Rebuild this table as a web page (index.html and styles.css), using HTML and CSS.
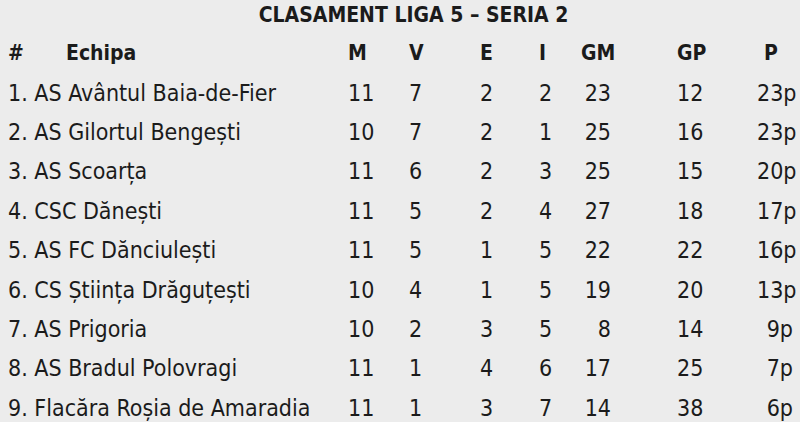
FILE: index.html
```html
<!DOCTYPE html>
<html lang="ro">
<head>
<meta charset="utf-8">
<title>Clasament Liga 5 – Seria 2</title>
<link rel="stylesheet" href="styles.css">
</head>
<body>
<div class="page">
  <h1 class="title">CLASAMENT LIGA 5 – SERIA 2</h1>
  <div class="table">
    <div class="row head">
      <div class="c name"><span class="hash">#</span><span>Echipa</span></div>
      <div class="c m">M</div><div class="c v">V</div><div class="c e">E</div><div class="c i">I</div>
      <div class="c gm">GM</div><div class="c gp">GP</div><div class="c p">P</div>
    </div>
    <div class="row"><div class="c name">1. AS Avântul Baia-de-Fier</div><div class="c m">11</div><div class="c v">7</div><div class="c e">2</div><div class="c i">2</div><div class="c gm">23</div><div class="c gp">12</div><div class="c p">23p</div></div>
    <div class="row"><div class="c name">2. AS Gilortul Bengești</div><div class="c m">10</div><div class="c v">7</div><div class="c e">2</div><div class="c i">1</div><div class="c gm">25</div><div class="c gp">16</div><div class="c p">23p</div></div>
    <div class="row"><div class="c name">3. AS Scoarța</div><div class="c m">11</div><div class="c v">6</div><div class="c e">2</div><div class="c i">3</div><div class="c gm">25</div><div class="c gp">15</div><div class="c p">20p</div></div>
    <div class="row"><div class="c name">4. CSC Dănești</div><div class="c m">11</div><div class="c v">5</div><div class="c e">2</div><div class="c i">4</div><div class="c gm">27</div><div class="c gp">18</div><div class="c p">17p</div></div>
    <div class="row"><div class="c name">5. AS FC Dănciulești</div><div class="c m">11</div><div class="c v">5</div><div class="c e">1</div><div class="c i">5</div><div class="c gm">22</div><div class="c gp">22</div><div class="c p">16p</div></div>
    <div class="row"><div class="c name">6. CS Știința Drăguțești</div><div class="c m">10</div><div class="c v">4</div><div class="c e">1</div><div class="c i">5</div><div class="c gm">19</div><div class="c gp">20</div><div class="c p">13p</div></div>
    <div class="row"><div class="c name">7. AS Prigoria</div><div class="c m">10</div><div class="c v">2</div><div class="c e">3</div><div class="c i">5</div><div class="c gm">8</div><div class="c gp">14</div><div class="c p">9p</div></div>
    <div class="row"><div class="c name">8. AS Bradul Polovragi</div><div class="c m">11</div><div class="c v">1</div><div class="c e">4</div><div class="c i">6</div><div class="c gm">17</div><div class="c gp">25</div><div class="c p">7p</div></div>
    <div class="row"><div class="c name">9. Flacăra Roșia de Amaradia</div><div class="c m">11</div><div class="c v">1</div><div class="c e">3</div><div class="c i">7</div><div class="c gm">14</div><div class="c gp">38</div><div class="c p">6p</div></div>
  </div>
</div>
</body>
</html>
```
FILE: styles.css
```css
html, body {
  margin: 0;
  padding: 0;
  background: #ececec;
}
body {
  font-family: "DejaVu Sans Condensed", "DejaVu Sans", sans-serif;
  font-stretch: condensed;
  color: #1b1b1b;
  font-size: 23px;
}
.page {
  width: 800px;
  height: 422px;
  overflow: hidden;
  padding: 0 7px 0 8px;
  box-sizing: border-box;
}
.title {
  margin: 0;
  height: 33px;
  line-height: 31px;
  font-size: 21px;
  font-weight: bold;
  text-align: center;
  padding-left: 26px;
}
.row {
  display: grid;
  grid-template-columns: 340px 61px 71px 59px 42px 34px 142px 36px;
  height: 39.4px;
  align-items: center;
}
.head {
  height: 40px;
  font-weight: bold;
  font-size: 21px;
}
.c { white-space: nowrap; }
.name { display: flex; }
.hash { width: 58px; }
.gm { text-align: right; padding-right: 4px; }
.head .gm { text-align: center; padding-right: 0; }
.gp { padding-left: 62px; }
.p { text-align: right; }
.head .p { text-align: left; padding-left: 7px; }
```
